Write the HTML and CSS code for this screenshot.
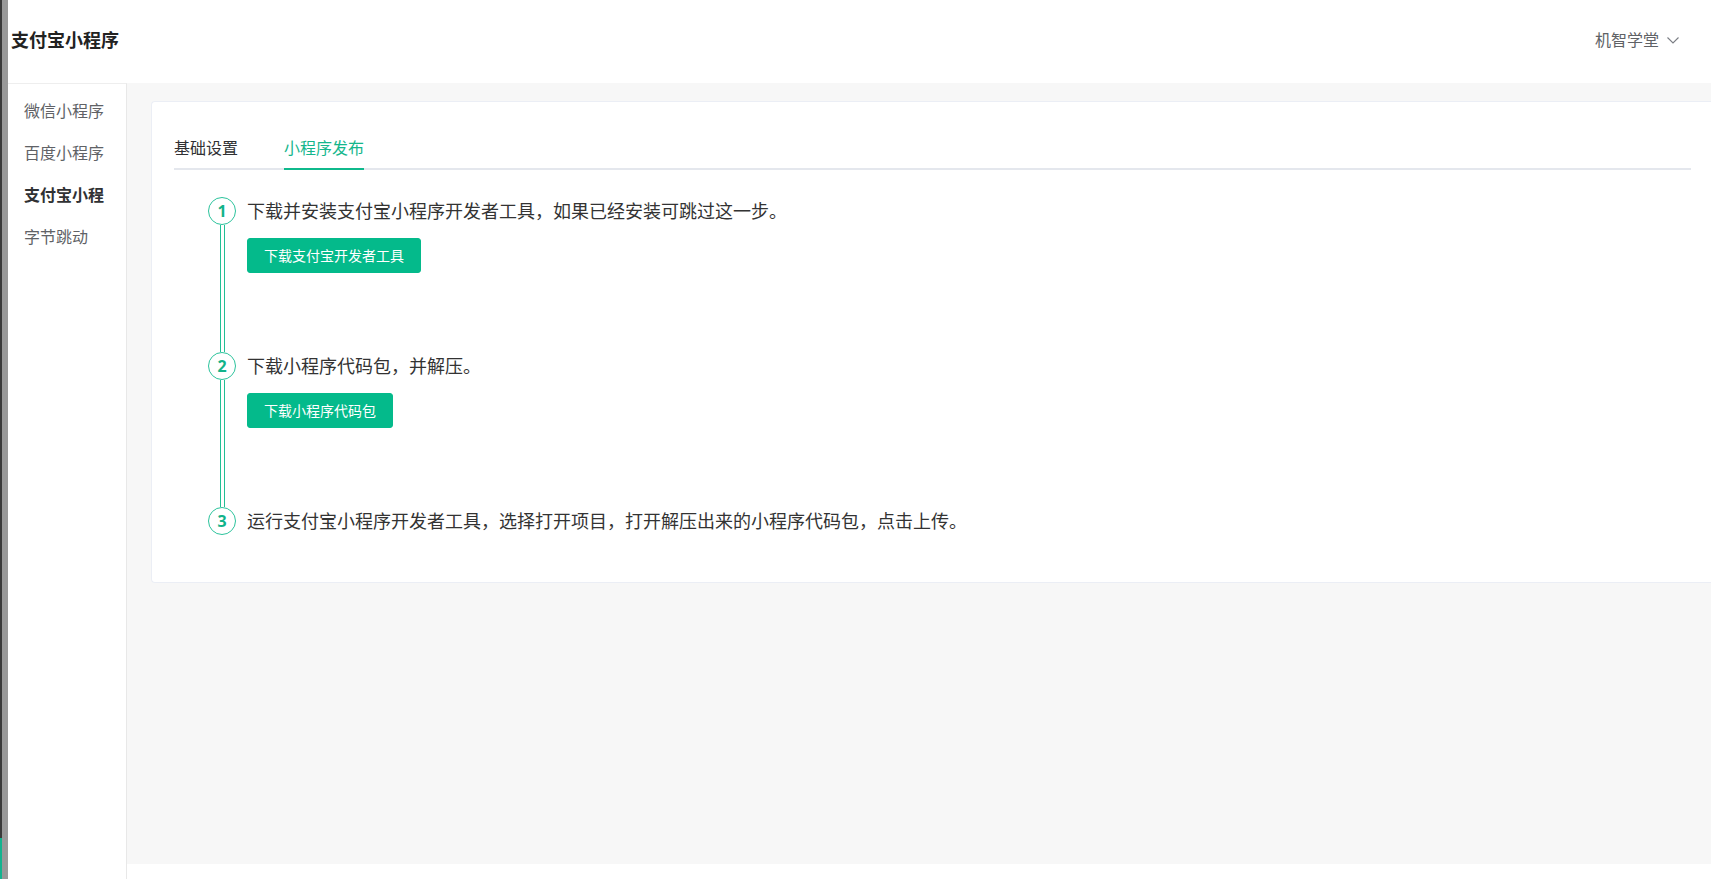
FILE: index.html
```html
<!DOCTYPE html>
<html lang="zh-CN">
<head>
  <meta charset="UTF-8">
  <title>支付宝小程序 - 小程序发布</title>
  <link rel="stylesheet" href="styles.css">
</head>
<body>
  <div class="edge-strip">
    <div class="edge-dark"><div class="edge-dark-top"></div><div class="edge-dark-bottom"></div></div>
    <div class="edge-grey"></div>
  </div>

  <div class="app">
    <header class="top-bar">
      <div class="brand">支付宝小程序</div>
      <div class="user-menu">
        <span class="user-name">机智学堂</span>
        <svg class="user-caret" width="12" height="7" viewBox="0 0 12 7">
          <path d="M0.5 0.5 L6 6 L11.5 0.5" fill="none" stroke="#7a7d84" stroke-width="1.1"/>
        </svg>
      </div>
    </header>

    <div class="layout">
      <nav class="side-nav">
        <div class="side-item">微信小程序</div>
        <div class="side-item">百度小程序</div>
        <div class="side-item active">支付宝小程</div>
        <div class="side-item">字节跳动</div>
      </nav>

      <main class="main">
        <div class="content">
          <section class="card">
            <div class="tabs">
              <div class="tab">基础设置</div>
              <div class="tab active">小程序发布</div>
            </div>

            <div class="steps">
              <div class="step">
                <div class="step-rail">
                  <div class="step-num">1</div>
                  <div class="step-line"></div>
                </div>
                <div class="step-body">
                  <div class="step-title">下载并安装支付宝小程序开发者工具，如果已经安装可跳过这一步。</div>
                  <button class="btn-primary">下载支付宝开发者工具</button>
                </div>
              </div>

              <div class="step">
                <div class="step-rail">
                  <div class="step-num">2</div>
                  <div class="step-line"></div>
                </div>
                <div class="step-body">
                  <div class="step-title">下载小程序代码包，并解压。</div>
                  <button class="btn-primary">下载小程序代码包</button>
                </div>
              </div>

              <div class="step last">
                <div class="step-rail">
                  <div class="step-num">3</div>
                </div>
                <div class="step-body">
                  <div class="step-title">运行支付宝小程序开发者工具，选择打开项目，打开解压出来的小程序代码包，点击上传。</div>
                </div>
              </div>
            </div>
          </section>
        </div>
        <div class="footer-gap"></div>
      </main>
    </div>
  </div>
</body>
</html>
```

FILE: styles.css
```css
* { box-sizing: border-box; }
html, body { height: 100%; }
body {
  margin: 0; display: flex; overflow: hidden; background: #fff;
  font-family: "Noto Sans CJK SC", "Noto Sans", sans-serif; color: #303133;
}

/* left window edge */
.edge-strip       { width: 8px; display: flex; flex-shrink: 0; }
.edge-dark        { width: 2px; display: flex; flex-direction: column; }
.edge-dark-top    { flex: 1; background: #3a3a3a; }
.edge-dark-bottom { height: 41px; background: #13b38f; }
.edge-grey        { flex: 1; background: #999; }

.app    { flex: 1; display: flex; flex-direction: column; min-width: 0; }

/* header */
.top-bar   { height: 83px; display: flex; align-items: center; justify-content: space-between;
             padding: 0 32px 5px 3px; background: #fff; flex-shrink: 0; }
.brand     { font-size: 18px; font-weight: bold; color: #222; }
.user-menu { display: flex; align-items: center; gap: 8px; color: #606266; font-size: 16px; }
.user-caret { margin-top: 2px; }

.layout   { flex: 1; display: flex; min-height: 0; }

/* sidebar */
.side-nav  { width: 119px; flex-shrink: 0; background: #fff; border-top: 1px solid #eee;
             border-right: 1px solid #e8e8e8; padding-top: 5px; }
.side-item { height: 42px; line-height: 42px; padding-left: 16px; font-size: 16px; color: #606266; }
.side-item.active { color: #303133; font-weight: bold; }

/* main */
.main       { flex: 1; display: flex; flex-direction: column; min-width: 0; }
.content    { flex: 1; background: #f7f7f7; padding: 18px 0 0 24px; }
.footer-gap { height: 15px; background: #fff; }

.card { background: #fff; border: 1px solid #ebeef5; border-right: none; border-radius: 4px 0 0 4px;
        padding: 26px 20px 47px 22px; }

.tabs       { display: flex; border-bottom: 2px solid #e4e7ed; }
.tab        { position: relative; height: 40px; line-height: 39px; padding: 0 23px; font-size: 16px; color: #303133; }
.tab:first-child { padding-left: 0; }
.tab.active { color: #14b68c; }
.tab.active::after { content: ""; position: absolute; left: 23px; right: 23px; bottom: -2px;
                     height: 2px; background: #0fb98c; }

/* steps */
.steps     { margin: 27px 0 0 34px; }
.step      { display: flex; gap: 11px; height: 155px; }
.step.last { height: 28px; }
.step-rail { width: 28px; display: flex; flex-direction: column; align-items: center; }
.step-num  { width: 28px; height: 28px; border-radius: 50%; border: 1px solid #2cc39c;
             display: flex; align-items: center; justify-content: center; padding-bottom: 1px;
             font-family: "Noto Sans", sans-serif; font-size: 16px; font-weight: bold; color: #12b38a; }
.step-line { flex: 1; width: 5px; border-left: 1px solid #22bf95; border-right: 1px solid #22bf95; }
.step-title { height: 28px; line-height: 26px; font-size: 18px; color: #333; }

.btn-primary { margin-top: 13px; height: 35px; padding: 0 16px 1px; border: 1px solid #04ba8b; border-radius: 3px;
               background: #04ba8b; color: #fff; font-family: inherit; font-size: 14px; font-weight: normal;
               cursor: pointer; }
```
